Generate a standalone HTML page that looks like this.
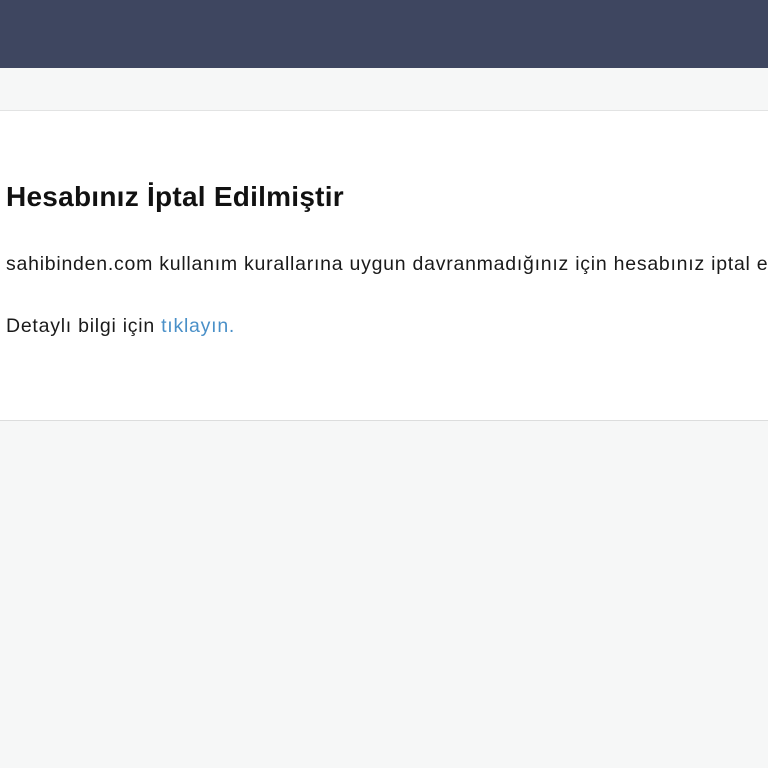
<!DOCTYPE html>
<html><head><meta charset="utf-8"><style>
html,body{margin:0;padding:0;width:768px;height:768px;overflow:hidden;background:#f6f7f7;font-family:"Liberation Sans",sans-serif;}
.top{height:68px;background:#3e4660;}
.band{height:42px;background:#f6f7f7;border-bottom:1px solid #e2e3e3;}
.panel{height:309px;background:#fff;border-bottom:1px solid #dcdddd;position:relative;white-space:nowrap;overflow:hidden;}
h1{position:absolute;left:6px;margin:0;font-size:28px;font-weight:bold;color:#111;line-height:32px;letter-spacing:0.25px;}
p{position:absolute;left:6px;margin:0;font-size:19.5px;color:#1a1a1a;line-height:22px;letter-spacing:0.75px;}
a{color:#4a90c8;text-decoration:none;}
</style></head><body>
<div class="top"></div>
<div class="band"></div>
<div class="panel">
<h1 style="top:70px">Hesabınız İptal Edilmiştir</h1>
<p style="top:142px">sahibinden.com kullanım kurallarına uygun davranmadığınız için hesabınız iptal edilmiştir.</p>
<p style="top:204px">Detaylı bilgi için <a>tıklayın.</a></p>
</div>
</body></html>
